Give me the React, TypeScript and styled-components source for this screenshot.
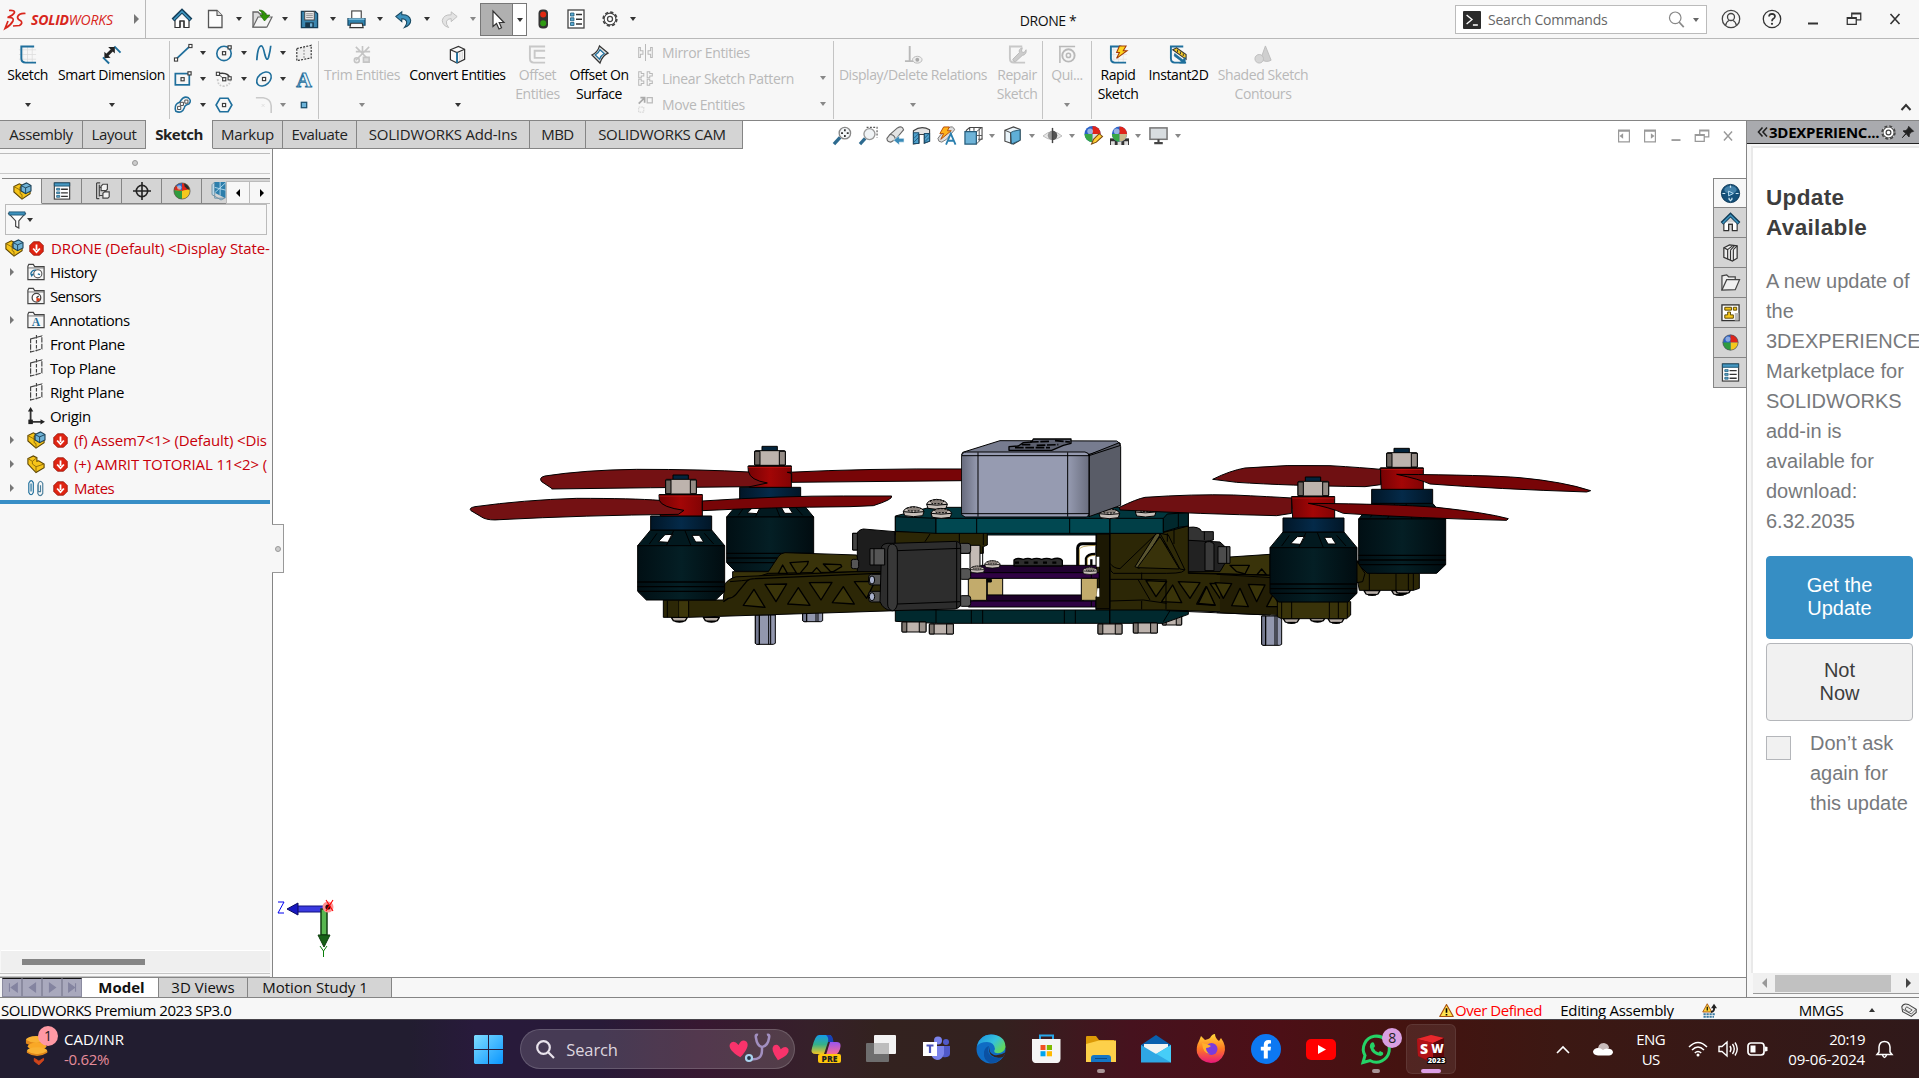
import React from 'react';
import styled, { createGlobalStyle, css } from 'styled-components';

const UI = `"Open Sans", "Noto Sans", sans-serif`;
const BLUE = '#1f6f9c';
const DARK = '#3c3c3c';
const DIM = '#b9b9b9';

const Global = createGlobalStyle`
  * { box-sizing: border-box; }
  html, body { margin: 0; height: 100%; overflow: hidden; }
  body { font-family: ${UI}; font-size: 15px; color: #000; background: #f7f7f7; }
  svg { display: block; flex: none; overflow: visible; }
`;

const Shell = styled.div`
  width: 1919px; height: 1078px; display: flex; flex-direction: column; overflow: hidden;
`;
const Label = styled.span<{ $ls?: number; $size?: number; $color?: string; $bold?: boolean; $lh?: number }>`
  white-space: pre;
  line-height: ${p => p.$lh ?? 19}px;
  letter-spacing: ${p => p.$ls ?? -0.5}px;
  font-size: ${p => p.$size ?? 15}px;
  font-weight: ${p => (p.$bold ? 700 : 400)};
  color: ${p => p.$color ?? 'inherit'};
`;
const Slot = styled.div<{ $w: number; $pad?: number }>`
  width: ${p => p.$w}px; flex: none; display: flex; align-items: center; justify-content: center;
  padding-top: ${p => p.$pad ?? 0}px;
`;
const Space = styled.div<{ $w?: number }>`
  ${p => (p.$w ? css`width: ${p.$w}px; flex: none;` : css`flex: 1;`)}
`;
const Caret = styled.i<{ $c?: string }>`
  width: 0; height: 0; border: 3px solid transparent; border-bottom: 0;
  border-top: 4px solid ${p => p.$c ?? '#333'};
`;

/* ---------- icons ---------- */
type IconBody = React.ReactNode;
const hatch = (c: string) => <path d="M5 1V19M10 1V19M15 1V19M1 5H19M1 10H19M1 15H19" stroke={c} strokeWidth=".8" />;
const icons: Record<string, IconBody> = {
  home: <><path d="M3 10V18.500H8V12H12V18.500H17V10" fill="#fff" stroke="#333" strokeWidth="1.200" /><path d="M8 18.500V12H12V18.500" fill="none" stroke="#333" strokeWidth="1.200" /><path d="M1 11L10 2L19 11" fill="none" stroke="#123c57" strokeWidth="4" /><path d="M1.800 10.600L10 2.400L18.200 10.600" fill="none" stroke="#3d93bd" strokeWidth="1.700" /></>,
  file: <><path d="M3.500 1.500H12L17 6.500V18.500H3.500Z" fill="#fdfdfd" stroke="#555" strokeWidth="1.300" /><path d="M12 1.500V6.500H17" fill="#ddd" stroke="#555" strokeWidth="1.100" /></>,
  open: <><path d="M1 18V3H6L8 5H14V18Z" fill="#ddd" stroke="#666" strokeWidth="1.300" /><path d="M1 18L6 8H20L15 18Z" fill="#f4f4f4" stroke="#666" strokeWidth="1.200" /><path d="M7 1Q13 1 14 6H18L12.500 12L8 6H11Q10 3 7 1Z" fill="#2f9406" stroke="#1d6304" strokeWidth=".6" /></>,
  save: <><path d="M1.500 1.500H16L18.500 4V18.500H1.500Z" fill="#3a86af" stroke="#143f5a" strokeWidth="1.400" /><rect x="5" y="1.500" width="10" height="9" fill="#f2f2f2" stroke="#444" /><path d="M6.500 4H13.500M6.500 6H13.500M6.500 8H13.500" stroke="#777" strokeWidth=".9" /><rect x="5.500" y="13" width="9" height="5.500" fill="#16364a" /><rect x="10.500" y="14" width="2.500" height="3.600" fill="#6fb1d6" /></>,
  print: <><rect x="5" y="1" width="10" height="8" fill="#fff" stroke="#444" strokeWidth="1.200" /><path d="M1 9H19V16H1Z" fill="#2f83ae" stroke="#14425e" strokeWidth="1.200" /><path d="M1.500 9.500H18.500" stroke="#8cc6e2" strokeWidth="1.500" /><path d="M4 14H16L17 18.500H3Z" fill="#f7f7f7" stroke="#333" strokeWidth="1.200" /></>,
  undo: <path d="M1 6.500L8 1V4.500Q17 4 18.500 11Q18.500 17 11 19.500Q14.500 15.500 13.500 12Q12 8.800 8 9V12.500Z" fill="#3d92bd" stroke="#16465f" strokeWidth="1.200" />,
  redo: <path d="M19 6.500L12 1V4.500Q3 4 1.500 11Q1.500 17 9 19.500Q5.500 15.500 6.500 12Q8 8.800 12 9V12.500Z" fill="#e3e3e3" stroke="#bdbdbd" strokeWidth="1.100" />,
  cursor: <path d="M6 1V16.500L9.500 13.500L12 19L14.500 17.800L12.200 12.500H17Z" fill="#fff" stroke="#333" strokeWidth="1.200" />,
  traffic: <><rect x="5.500" y=".5" width="9.500" height="19" rx="4" fill="#333" /><circle cx="10.200" cy="5.500" r="3" fill="#e12a12" /><circle cx="10.200" cy="14.200" r="3" fill="#2f9a13" /></>,
  list: <><rect x="2" y="1" width="16" height="18" fill="#fff" stroke="#444" strokeWidth="1.300" /><path d="M4.500 4H8V7H4.500ZM4.500 8.800H8V11.800H4.500ZM4.500 13.500H8V16.500H4.500Z" fill="#59a8d0" stroke="#205a79" strokeWidth=".8" /><path d="M10 5.500H16M10 10.300H16M10 15H16" stroke="#333" strokeWidth="1.500" /></>,
  gear: <><circle cx="10" cy="10" r="7.600" fill="#fff" stroke="#444" strokeWidth="1.800" strokeDasharray="3.600 2.370" /><circle cx="10" cy="10" r="6.500" fill="#fff" stroke="#444" strokeWidth="1.200" /><circle cx="10" cy="10" r="2.800" fill="#fff" stroke="#444" strokeWidth="1.400" /></>,
  sketch: <>{hatch('#ddd')}<path d="M17 1.500H3.500V14Q3.500 18.500 8 18.500H19" fill="none" stroke={BLUE} strokeWidth="2" /></>,
  dim: <><path d="M1 13L7.500 19.500M13 1.500L19.500 8" stroke={BLUE} strokeWidth="2" /><path d="M4.500 11.500L10.500 5.500" stroke="#222" strokeWidth="3.200" /><path d="M6.500 2H13.500V9ZM2.500 7V14L9 13.500Z" fill="#222" /></>,
  line: <><path d="M2 17L18 2" stroke={BLUE} strokeWidth="2" /><rect x="0.500" y="15.500" width="3.500" height="3.500" fill="#fff" stroke={DARK} strokeWidth="1.200" /><rect x="16.500" y=".5" width="3.500" height="3.500" fill="#fff" stroke={DARK} strokeWidth="1.200" /></>,
  circle: <><circle cx="10" cy="10.500" r="8" fill="none" stroke={BLUE} strokeWidth="1.800" /><rect x="8.300" y="8.500" width="3.500" height="3.500" fill="#fff" stroke={DARK} strokeWidth="1.300" /><rect x="14.500" y="2" width="3.500" height="3.500" fill="#fff" stroke={DARK} strokeWidth="1.300" /></>,
  spline: <path d="M2 18Q3 2 7 2Q9 2 11 12Q13 20 15 15Q17 8 17.500 2" fill="none" stroke={BLUE} strokeWidth="1.900" />,
  plane3: <><path d="M2 5L18 1.500V15.500L2 18.500Z" fill="#eee" stroke="#333" strokeWidth="1.300" strokeDasharray="2.200 1.400" /><path d="M10 3V17" stroke="#777" strokeDasharray="2 1.500" /></>,
  rect: <><rect x="1.500" y="4" width="15.500" height="12.500" fill="none" stroke={BLUE} strokeWidth="1.900" /><rect x="7.800" y="8.500" width="3.500" height="3.500" fill="#fff" stroke={DARK} strokeWidth="1.300" /><rect x="15.500" y="2" width="3.500" height="3.500" fill="#fff" stroke={DARK} strokeWidth="1.300" /></>,
  arc: <><path d="M4 4Q15 2 17 10" fill="none" stroke={DARK} strokeWidth="1.700" /><path d="M3 10Q3 18 10 18Q17 17 17 11" fill="none" stroke="#ccc" strokeWidth="2" strokeDasharray="2 1.500" /><path d="M3 4L10 10" stroke={DARK} /><rect x="1.500" y="2.500" width="3.500" height="3.500" fill="#fff" stroke={DARK} strokeWidth="1.200" /><rect x="8.500" y="8.500" width="3.500" height="3.500" fill="#fff" stroke={DARK} strokeWidth="1.300" /><rect x="14.500" y="7.500" width="3.500" height="3.500" fill="#fff" stroke={DARK} strokeWidth="1.200" /></>,
  ellipse: <><ellipse cx="10" cy="10" rx="9.200" ry="6.500" transform="rotate(-42 10 10)" fill="none" stroke={BLUE} strokeWidth="1.800" /><rect x="8.300" y="8.300" width="3.500" height="3.500" fill="#fff" stroke={DARK} strokeWidth="1.300" /></>,
  slot: <><path d="M2 17Q0 11 4 8Q7 7 7.500 5Q11 -.5 16 2Q20 5 16.500 9Q12 10 11.500 13Q9 20 2 17Z" fill="none" stroke={BLUE} strokeWidth="1.700" /><path d="M4 11.500H7.500V15H4ZM7 7H10.500V10.500H7ZM12 4.500H15.500V8H12Z" fill="#fff" stroke={DARK} /></>,
  hex: <><path d="M5.500 2.500H14.500L18.800 10L14.500 17.500H5.500L1.200 10Z" fill="none" stroke={BLUE} strokeWidth="1.800" /><rect x="8.300" y="8.300" width="3.500" height="3.500" fill="#fff" stroke={DARK} strokeWidth="1.300" /></>,
  fillet: <><path d="M1 2H9Q17.500 3 18 11V19" fill="none" stroke="#cacaca" strokeWidth="1.800" /><path d="M7.500 9L10.500 12M10.500 9L7.500 12" stroke="#ddd" /></>,
  point: <rect x="7" y="7" width="6" height="6" fill="#6db4da" stroke="#1b506e" strokeWidth="1.400" />,
  trim: <g stroke="#c4c4c4" fill="none" strokeWidth="1.700"><path d="M3 2L17 16M17 2L3 16M10 1V6M3 7H18" /><circle cx="4" cy="16" r="2.600" /><path d="M11 13H17V18H11Z" fill="#ddd" /></g>,
  convert: <><path d="M2.500 5L11 1.500L17.500 4.500V15L9.500 19L2.500 15.500Z" fill="#fafafa" stroke="#333" strokeWidth="1.300" /><path d="M2.500 5L9.500 8L17.500 4.500" fill="none" stroke="#333" strokeWidth="1.200" /><path d="M9.500 8V19" stroke={BLUE} strokeWidth="2" /><path d="M12.500 8V17M15 7V15.500" stroke="#ccc" /></>,
  offset: <path d="M18 1.500H2V14Q2 18.500 6 18.500H18M18 6H7V13.500H18" fill="none" stroke="#c8c8c8" strokeWidth="2" />,
  surface: <><path d="M10 1L19 8.500Q13 11 10.500 19L2 10.500Q8 8 10 1Z" fill="#ddd" stroke="#333" strokeWidth="1.300" /><path d="M10.500 5L15 9Q11.500 11 10 15L5.500 10.500Q9 8.500 10.500 5Z" fill="#f4f9fc" stroke={BLUE} strokeWidth="1.300" /></>,
  mirror: <g stroke={DIM} fill="none" strokeWidth="1.200"><path d="M10 0V20" /><path d="M2 4H4V8H7V12H4V16H2ZM18 4H16V8H13V12H16V16H18Z" /></g>,
  pattern: <g stroke={DIM} fill="none" strokeWidth="1.200"><path d="M2 2H5V4H8V7H5V9H2ZM12 2H15V4H18V7H15V9H12ZM2 11H5V13H8V16H5V18H2ZM12 11H15V13H18V16H15V18H12Z" /></g>,
  move: <><path d="M2 9L8 3M4 2H9V8" stroke="#aaa" fill="none" strokeWidth="2" /><path d="M12 2H18V8H12Z" fill="none" stroke="#bbb" strokeWidth="1.500" /><path d="M2 13H8V19H2Z" fill="none" stroke="#ccc" strokeDasharray="2 1" /></>,
  relations: <><path d="M6 1V17M1 17H10" stroke={DIM} strokeWidth="2" /><ellipse cx="14" cy="15.500" rx="5" ry="3.600" fill="#eee" stroke={DIM} /><circle cx="14" cy="15.500" r="2" fill="#aaa" /></>,
  repair: <><path d="M15 1.500H2V14Q2 18.500 6 18.500H18" fill="none" stroke="#c8c8c8" strokeWidth="2" /><path d="M5 15L12 8Q11 4 15 3L14 7L17 8L19 5Q20 10 15 11L8 17.500Q5 18 5 15Z" fill="#ccc" stroke="#bbb" /></>,
  quick: <><path d="M1 1.500H18M2 1V19" stroke={DIM} strokeWidth="1.600" /><circle cx="11" cy="11" r="6.500" fill="none" stroke={DIM} strokeWidth="2" /><circle cx="11" cy="11" r="2.200" fill="none" stroke={DIM} strokeWidth="1.600" /></>,
  rapid: <>{hatch('#e2e2e2')}<path d="M13 1.500H2V14Q2 18.500 6 18.500H18" fill="none" stroke={BLUE} strokeWidth="2" /><path d="M11 1H18L15 6H19L8 14L11 8H8Z" fill="#ffd51f" stroke="#a33a08" strokeWidth="1.100" /></>,
  instant: <><path d="M15 1.500H2V14Q2 18.500 6 18.500H18" fill="none" stroke={BLUE} strokeWidth="2" /><path d="M4 5L8 3L18 10V15L15 13Z" fill="#f4cb2a" stroke="#333" strokeWidth="1.100" /><path d="M9 5V7.500M12 7V9.500M15 9V11.500" stroke="#333" /><path d="M6 9L14.500 15.500L17 13V19H11L13 17L5.500 11.500Z" fill={BLUE} stroke={BLUE} strokeWidth=".8" /></>,
  shaded: <><path d="M12 1L18 16Q13 19 7 15Z" fill="#cfcfcf" stroke="#bdbdbd" /><circle cx="5.500" cy="14.500" r="4.500" fill="#d6d6d6" stroke="#bdbdbd" /></>,
  zoomfit: <><path d="M1 19L7.500 12" stroke="#2d6a8f" strokeWidth="3.600" /><circle cx="12.500" cy="7.500" r="6" fill="#f3f6f8" stroke="#888" strokeWidth="1.400" /><path d="M12.500 3.500V5.500M12.500 9.500V11.500M8.500 7.500H10.500M14.500 7.500H16.500" stroke="#333" strokeWidth="1.800" /></>,
  zoomarea: <><path d="M8 1.500H19V12" fill="none" stroke="#555" strokeDasharray="2 1.500" strokeWidth="1.200" /><path d="M1 19L6.500 13" stroke="#2d6a8f" strokeWidth="3.400" /><circle cx="11" cy="8.500" r="5.800" fill="#f0f3f5" stroke="#999" strokeWidth="1.400" /></>,
  prev: <><path d="M1 13L4 9L12 2Q17 -1 18.500 4L10 14L5 17Q1 17 1 13Z" fill="#e4e4e4" stroke="#666" strokeWidth="1.200" /><path d="M4 9Q9 9 10 14" fill="none" stroke="#666" strokeWidth="1.200" /><path d="M8 15L14 10V13H19V17H14V20Z" fill="#3a8bb8" stroke="#fff" strokeWidth=".6" /></>,
  section: <><path d="M1.500 5Q10 -1 18.500 4V16L13 18V9L7.500 9V18L1.500 19Z" fill="#e4e4e4" stroke="#444" strokeWidth="1.200" /><path d="M1.500 7H7V18.500H1.500ZM13 8H18.500V16L13 18Z" fill="#4d9fca" stroke="#1d4e6d" strokeWidth="1.100" /><path d="M2 13L7 8M2 17L7 12M13 13L18 8M13 17L18 12" stroke="#1d4e6d" strokeWidth=".8" /></>,
  annot: <><path d="M1 13L4 9L12 2Q17 -1 18.500 4L10 14L5 17Q1 17 1 13Z" fill="#ddd" stroke="#777" /><path d="M7 1H13L11 5H15L4 14L7 8H3Z" fill="#ffb21a" stroke="#b34a08" /><path d="M9.500 19.500L14.500 8L19.500 19.500M12 15.500H17.500" fill="none" stroke="#2a7fae" strokeWidth="1.900" /></>,
  orient: <><path d="M6 5V1.500H19V14H15M10.500 1.500V5M6 1.500L2 5" fill="none" stroke="#444" strokeWidth="1.100" /><path d="M1 19V6H13V19Z" fill="#6fb4d8" stroke="#255b7a" strokeWidth="1.300" /><path d="M13 6L19 1.500M13 19L19 13M16 1V16M13 10H19" stroke="#555" /></>,
  display: <><path d="M2 4.500L11 1L18 3.500V15L11 19L2 16Z" fill="#e9f4fa" stroke="#444" strokeWidth="1.200" /><path d="M8 7L11 5.500L18 4V15L9 19Z" fill="#5fafd7" stroke="#24556f" /><path d="M2 4.500L8 7V18.500" fill="none" stroke="#444" /></>,
  eye: <><path d="M0 10.500Q10 1.500 20 10.500Q10 18 0 10.500Z" fill="#e8e8e8" stroke="#bbb" /><circle cx="10" cy="10" r="5" fill="#999" /><path d="M10 5A5 5 0 0 1 10 15Z" fill="#555" /><path d="M10 2V18" stroke="#444" strokeWidth="1.500" /></>,
  sphere: <><circle cx="10" cy="10" r="9" fill="#2a62c8" /><path d="M10 10V1A9 9 0 0 1 19 10Z" fill="#e02419" /><path d="M10 10H19A9 9 0 0 1 10 19Z" fill="#f4c81e" /><path d="M10 10V19A9 9 0 0 1 1 10Z" fill="#2f9b3e" /><circle cx="7" cy="6" r="3" fill="#fff" opacity=".45" /><circle cx="10" cy="10" r="9" fill="none" stroke="#555" strokeWidth=".8" /></>,
  ball: <><circle cx="10" cy="10" r="9" fill="#e6c31a" /><path d="M10 10L3 4A9 9 0 0 1 10 1Z" fill="#2a62c8" /><path d="M10 10V1A9 9 0 0 1 18.500 8Z" fill="#e02419" /><path d="M10 10L18.500 8A9 9 0 0 1 10 19Z" fill="#f4c81e" /><path d="M10 10V19A9 9 0 0 1 1 9Z" fill="#2f9b3e" /><path d="M10 10L1 9Q1 6 3 4Z" fill="#d62b1c" /><path d="M12 1Q18 3 18.500 9Q15 8 13 5Z" fill="#2b2b2b" /><circle cx="7" cy="6" r="2.500" fill="#fff" opacity=".5" /><circle cx="10" cy="10" r="9" fill="none" stroke="#555" strokeWidth=".8" /></>,
  appearance: <><circle cx="9" cy="8.500" r="8.500" fill="#2a62c8" /><path d="M9 8.500V0A8.500 8.500 0 0 1 17.500 8.500Z" fill="#e02419" /><path d="M9 8.500H.5A8.500 8.500 0 0 0 9 17Z" fill="#37a746" /><path d="M9 8.500H17.500A8.500 8.500 0 0 1 9 17Z" fill="#ddd" /><circle cx="6.500" cy="5.500" r="3" fill="#fff" opacity=".5" /><path d="M8 19L10 14L16 8L19.500 11L13 17Z" fill="#ffcf33" stroke="#7c4a11" strokeWidth="1.100" /></>,
  scene: <><path d="M0 13H20V20H0Z" fill="#333" /><path d="M1 16H5V20H1ZM8 16H12V20H8ZM15 16H19V20H15Z" fill="#ddd" /><circle cx="10" cy="8.500" r="8" fill="#2a62c8" /><path d="M10 8.500V.5A8 8 0 0 1 18 8.500Z" fill="#e02419" /><path d="M10 8.500H2A8 8 0 0 0 10 16.500Z" fill="#37a746" /><path d="M10 8.500H18A8 8 0 0 1 10 16.500Z" fill="#c9b98a" /><circle cx="7" cy="5.500" r="3" fill="#fff" opacity=".5" /></>,
  monitor: <><rect x="1" y="2" width="18" height="12" fill="#d8dde0" stroke="#777" strokeWidth="1.600" /><path d="M10 14V17.500M5.500 18H14.500" stroke="#444" strokeWidth="2.200" /></>,
  assembly: <><path d="M1 11V5L7 2L11 4L8 6V9L12 11L19 8V13L10 19Z" fill="#f6c419" stroke="#5d4503" strokeWidth="1.200" /><path d="M1 5L8 9V13L10 14V19" fill="none" stroke="#8a6a09" /><path d="M9 4L15 1L20 4V10L14 13L9 10Z" fill="#6fb2d6" stroke="#1a3f55" strokeWidth="1.200" /><path d="M9 4L14 6.500L20 4M14 6.500V13" stroke="#1a3f55" fill="none" /></>,
  part: <><path d="M1 10V4L7 1L11 3V7L13 6.500L19 10V14L10 19.500Z" fill="#f6c419" stroke="#5d4503" strokeWidth="1.200" /><path d="M1 4L6 7V10L10 13V19M6 7L11 3M10 13L19 10" fill="none" stroke="#8a6a09" /></>,
  props: <><rect x="1.500" y="1" width="17" height="18" fill="#fff" stroke="#444" strokeWidth="1.300" /><path d="M1.500 1H18.500V4.500H1.500Z" fill="#4698c2" stroke="#1c516e" /><path d="M4 7H7.500V9H4ZM4 11H7.500V13H4ZM4 15H7.500V17H4Z" fill="#5aa9d1" stroke="#1e5877" strokeWidth=".8" /><path d="M9 8H16.500M9 12H16.500M9 16H16.500" stroke="#333" strokeWidth="1.500" /></>,
  config: <g fill="#f2f2f2" stroke="#444" strokeWidth="1.300"><path d="M4 1V18.500M7 3V16M4 1H8M7 6H11M7 15H11M4 18.500H7" fill="none" /><path d="M9 4.500L11 2.500H16V8L14.500 9.500H9ZM11 12.500L13 11H18V16.500L16.500 18H11Z" /></g>,
  target: <><circle cx="10" cy="10" r="6.300" fill="none" stroke="#222" strokeWidth="1.800" /><path d="M10 0V20M0 10H20" stroke="#222" strokeWidth="1.800" /></>,
  cam: <><path d="M0 3L3 0V18H14L10 20L0 14Z" fill="#bcd9ea" stroke="#6c8ea2" /><path d="M3 0H15V18L3 12Z" fill="#2d7fac" /><path d="M3 6L15 9M9 0V15M3 12L15 1" stroke="#b9ddef" /></>,
  filter: <><path d="M1 3H19L12 11V19L8.500 17V11Z" fill="#fff" stroke="#444" strokeWidth="1.300" /><path d="M1 1H19V4.500H1Z" fill="#3d91bc" stroke="#1a5170" strokeWidth=".9" /></>,
  history: <><path d="M1 3.500L2 1.500H7L8.500 4H19V18.500H1Z" fill="#f6f6f6" stroke="#444" strokeWidth="1.300" /><path d="M1 5.500H19" stroke="#666" /><circle cx="12" cy="12" r="4.500" fill="#fff" stroke="#555" strokeWidth="1.200" /><path d="M12 12L14.500 13M4 12Q6 7 10 8" fill="none" stroke={BLUE} strokeWidth="1.400" /><path d="M3.500 12H8L5 15.500Z" fill={BLUE} /></>,
  sensors: <><path d="M1 3.500L2 1.500H7L8.500 4H19V18.500H1Z" fill="#f6f6f6" stroke="#444" strokeWidth="1.300" /><path d="M1 5.500H19" stroke="#666" /><circle cx="10.500" cy="12" r="4.800" fill="#fff" stroke="#444" strokeWidth="1.400" /><path d="M10.500 12L13 10" stroke="#333" strokeWidth="1.400" /><path d="M10.500 12L15 13Q14 16 10.500 16.500Z" fill="#dd3a18" /></>,
  annotations: <><path d="M1 3.500L2 1.500H7L8.500 4H19V18.500H1Z" fill="#f6f6f6" stroke="#444" strokeWidth="1.300" /><path d="M1 5.500H19" stroke="#666" /><text x="10" y="17" fontSize="13" fontFamily="Liberation Serif, serif" fontWeight="700" fill={BLUE} textAnchor="middle">A</text></>,
  plane: <><path d="M4 4.500L16.500 1V15.500L4 19Z" fill="none" stroke="#444" strokeWidth="1.300" strokeDasharray="6 1.200" /><path d="M10.500 0V18" stroke="#444" strokeWidth="1.300" strokeDasharray="4 1.500" /></>,
  origin: <><path d="M4 3V16.500H17" fill="none" stroke="#333" strokeWidth="2" /><path d="M4 0L7 5H1ZM20 16.500L15 13.500V19.500Z" fill="#222" /><rect x="1.500" y="14" width="5" height="5" fill="#222" /></>,
  mates: <g fill="none" strokeWidth="1.300"><path d="M2 4V15Q4.500 20 7 15V4Q4.500 -.5 2.500 4M4.500 5V14" stroke={BLUE} /><path d="M12 6V16Q14.500 21 17.500 16V5Q15 0 12.500 5V14H15V7" stroke="#4b7f9c" /></g>,
  down: <><path d="M6 1H14L19 6V14L14 19H6L1 14V6Z" fill="#df2412" stroke="#8c0d03" /><path d="M10 4.500V12M5.500 10L10 15L14.500 10" fill="none" stroke="#fff" strokeWidth="2.400" /></>,
  compass: <><circle cx="10" cy="10" r="9.600" fill="#14507a" stroke="#0d3958" /><ellipse cx="10" cy="6" rx="6.500" ry="4" fill="#5796bd" opacity=".7" /><path d="M8 7.500L13 10L8 12.500Z" fill="#1d6b9c" stroke="#bfe0f3" /><path d="M1.500 10H4.500M15.500 10H18.500M10 1.500V4M8.500 14.500V16L10 17.500L11.500 16V14.500" stroke="#cfe8f5" strokeWidth="1.300" fill="none" /></>,
  books: <><path d="M3 5L9 2L17 3V16L12 19L3 15Z" fill="#eee" stroke="#333" strokeWidth="1.300" /><path d="M3 5L7 7V17M7 7L12 3M10 7.500V18M10 7.500L14 3M13 7V18.500M13 7L17 3" fill="none" stroke="#333" strokeWidth="1.200" /></>,
  folder: <><path d="M1 18V3L6 2L8 4H15V7" fill="#eee" stroke="#444" strokeWidth="1.300" /><path d="M1 18L6 7H19.500L15 17.500Z" fill="#f0f0f0" stroke="#444" strokeWidth="1.300" /></>,
  palette: <><rect x="1" y="2" width="18" height="16.500" fill="#fff" stroke="#333" strokeWidth="1.400" /><path d="M4 4.500H11V7.500H4ZM13 4.500H16.500V7.500H13ZM7 9.500H10V12.500H13V16H4V12.500H7Z" fill="#f5c61b" stroke="#5a4600" /><rect x="14.500" y="10.500" width="4" height="8" fill="#bbb" /></>,
  warn: <><path d="M10 2L19 18H1Z" fill="#ffe14d" stroke="#a84f0c" strokeWidth="1.500" strokeLinejoin="round" /><path d="M10 7V13M10 14.500V16.500" stroke="#000" strokeWidth="2.200" /></>,
  rebuild: <><path d="M7 1L13 12H1Z" fill="#ffd83b" stroke="#a84f0c" strokeWidth="1.200" /><path d="M7 5V10" stroke="#000" strokeWidth="1.600" /><path d="M12 12Q17 11 16 6" fill="none" stroke="#222" strokeWidth="2.600" /><path d="M12 7L16 1L20 7Z" fill="#222" /><path d="M2 15H18M2 18.500H16" stroke="#3b7ba1" strokeWidth="2.500" strokeDasharray="3 1" /></>,
  tag: <><path d="M1 6Q3 1 9 3L19 9V13L13 18L2 12Z" fill="#eee" stroke="#444" strokeWidth="1.300" /><path d="M7 6L14 10L10 13L5 9ZM2 9L13 15L19 9" fill="none" stroke="#444" /></>,
  user: <g fill="none" stroke="#444" strokeWidth="1.300"><circle cx="10" cy="10" r="8.700" /><circle cx="10" cy="8" r="3.500" /><path d="M4.500 16.500Q5.500 12.500 8 11.500M15.500 16.500Q14.500 12.500 12 11.500" /></g>,
  help: <><circle cx="10" cy="10" r="8.700" fill="none" stroke="#333" strokeWidth="1.300" /><path d="M7 7.500Q7.200 4.800 10 4.800Q13 5 13 7.500Q12.800 9 11 10Q10 10.800 10 12.200" fill="none" stroke="#333" strokeWidth="1.700" /><circle cx="10" cy="14.800" r="1.100" fill="#333" /></>,
  min: <path d="M5 14.500H15" stroke="currentColor" strokeWidth="2" />,
  restore: <path d="M7.500 8V3.500H17.500V11H13M2.500 8.500H12.500V16H2.500ZM2.500 9.200H12.500M7.500 4.200H17.500" fill="none" stroke="currentColor" strokeWidth="1.400" />,
  close: <path d="M5.500 5L14.500 15M14.500 5L5.500 15" stroke="currentColor" strokeWidth="1.600" />,
  paneL: <><path d="M4 3.500H16V16.500H4ZM4 4.500H16" fill="none" stroke="#999" strokeWidth="1.300" /><path d="M9 7V13L5 10Z" fill="#999" /></>,
  paneR: <><path d="M4 3.500H16V16.500H4ZM4 4.500H16" fill="none" stroke="#999" strokeWidth="1.300" /><path d="M11 7V13L15 10Z" fill="#999" /></>,
  loupe: <><circle cx="8.500" cy="8" r="6.800" fill="none" stroke="#888" strokeWidth="1.400" /><path d="M13 13L18.500 19" stroke="#888" strokeWidth="2" /></>,
  prompt: <><rect width="20" height="20" rx="1" fill="#2b2b2b" /><path d="M4 4.500L10 9.500L4 14.500M11 15.500H16.500" fill="none" stroke="#fff" strokeWidth="1.500" /></>,
  pin: <path d="M11 2L18 9L15 10L12 13L11.500 17L7.500 12.500L2 18L7 12L3 8.500L7 8L10 5Z" fill="#222" stroke="#222" strokeWidth="1.300" />,
};
const Icon = ({ n, s = 20 }: { n: string; s?: number }) =>
  n === 'A' ? (
    <svg width={s} height={s} viewBox="0 0 20 20"><text x="10" y="18.500" textAnchor="middle" fontFamily="Liberation Serif, serif" fontWeight="700" fontSize="24" fill="#eaf4fa" stroke={BLUE} strokeWidth="1.100">A</text></svg>
  ) : (
    <svg width={s} height={s} viewBox="0 0 20 20">{icons[n]}</svg>
  );

/* ---------- title bar ---------- */
const TitleBar = styled.header`
  height: 39px; flex: none; display: flex; border-bottom: 1px solid #b9b9b9; background: #f7f7f7; color: #333;
`;
const Brand = styled.div`
  width: 146px; border-right: 1px solid #b9b9b9; display: flex; align-items: center; padding-left: 5px; flex: none;
`;
const BrandText = styled.div`
  font: italic 700 14px "Open Sans", sans-serif; color: #d8261c; letter-spacing: -0.2px; margin-left: 5px; width: 84px; padding-top: 1px;
  span { font-weight: 400; }
`;
const Play = styled.i<{ $c?: string; $dir?: 'l' | 'r'; $s?: number }>`
  width: 0; height: 0; border: ${p => p.$s ?? 4}px solid transparent;
  ${p => p.$dir === 'l' ? css`border-left: 0; border-right-color: ${p.$c ?? '#777'};` : css`border-right: 0; border-left-color: ${p.$c ?? '#777'};`}
`;
const SelectTool = styled.div`
  width: 47px; height: 33px; margin: 3px 0 0; display: flex; border: 1px solid #777; background: #fff; flex: none;
`;
const SelectFace = styled.div`
  width: 32px; background: #b0b0b0; border-right: 1px solid #777; display: flex; align-items: center; justify-content: center;
`;
const SelectDrop = styled.div`flex: 1; display: flex; align-items: center; justify-content: center;`;
const SearchBox = styled.div`
  width: 252px; height: 29px; margin-top: 5px; background: #fff; border: 1px solid #bbb; display: flex; align-items: center; padding-left: 7px; flex: none;
`;

const TitleBarView = () => (
  <TitleBar>
    <Brand>
      <svg width="21" height="22" viewBox="0 0 21 22" fill="none" stroke="#d8261c" strokeWidth="1.700">
        <path d="M4 2.500Q10 2 9.500 4.500Q8 7.500 2.500 9.500Q9.500 9 8 13Q5.500 17.500 0 20.500L3 13M20.500 5.500Q14 5 12.500 9Q12.500 11.500 16 13Q18 15.500 14.500 17.500L8 18" />
      </svg>
      <BrandText>SOLID<span>WORKS</span></BrandText>
      <Slot $w={48}><Play $s={5} /></Slot>
    </Brand>
    <Space $w={20} />
    <Slot $w={32}><Icon n="home" /></Slot>
    <Slot $w={34}><Icon n="file" /></Slot><Slot $w={13}><Caret /></Slot>
    <Slot $w={33}><Icon n="open" /></Slot><Slot $w={14}><Caret /></Slot>
    <Slot $w={34}><Icon n="save" s={19} /></Slot><Slot $w={13}><Caret /></Slot>
    <Slot $w={34}><Icon n="print" s={19} /></Slot><Slot $w={13}><Caret /></Slot>
    <Slot $w={34}><Icon n="undo" s={17} /></Slot><Slot $w={13}><Caret /></Slot>
    <Slot $w={33}><Icon n="redo" s={17} /></Slot><Slot $w={14}><Caret $c="#888" /></Slot>
    <SelectTool><SelectFace><Icon n="cursor" /></SelectFace><SelectDrop><Caret /></SelectDrop></SelectTool>
    <Slot $w={31}><Icon n="traffic" /></Slot>
    <Slot $w={36}><Icon n="list" /></Slot>
    <Slot $w={32}><Icon n="gear" s={18} /></Slot><Slot $w={14}><Caret /></Slot>
    <Space $w={380} />
    <Slot $w={56} $pad={2}><Label $size={14} $ls={-0.4} $color="#111">DRONE *</Label></Slot>
    <Space $w={379} />
    <SearchBox>
      <Icon n="prompt" s={18} />
      <Space $w={7} />
      <Label $color="#666" $size={14} $ls={-0.22}>Search Commands</Label>
      <Space />
      <Icon n="loupe" s={17} />
      <Slot $w={21}><Caret $c="#666" /></Slot>
    </SearchBox>
    <Space $w={3} />
    <Slot $w={41}><Icon n="user" /></Slot>
    <Slot $w={41}><Icon n="help" /></Slot>
    <Slot $w={41}><Icon n="min" /></Slot>
    <Slot $w={41}><Icon n="restore" s={18} /></Slot>
    <Slot $w={41}><Icon n="close" /></Slot>
  </TitleBar>
);

/* ---------- ribbon ---------- */
const Ribbon = styled.div`
  height: 82px; flex: none; display: flex; border-bottom: 1px solid #858585; background: #f7f7f7; padding-top: 2px;
`;
const Tool = styled.div<{ $w: number; $dim?: boolean }>`
  width: ${p => p.$w}px; flex: none; display: flex; flex-direction: column; align-items: center; padding-top: 4px;
  color: ${p => (p.$dim ? DIM : '#000')};
`;
const ToolText = styled.div`
  height: 38px; margin-top: 1px; text-align: center; white-space: pre; font-size: 14px; line-height: 19px; letter-spacing: -0.42px;
`;
const Divider = styled.div`width: 1px; height: 78px; background: #c4c4c4; flex: none;`;
const SketchGrid = styled.div`
  width: 148px; display: grid; grid-template-columns: 25px 15px 27px 13px 27px 12px 29px; grid-auto-rows: 26px;
  align-items: center; justify-items: center; margin-top: -1px; flex: none;
`;
const SmallTools = styled.div`width: 199px; display: flex; flex-direction: column; color: ${DIM}; margin-top: -2px; flex: none;`;
const SmallRow = styled.div`height: 26px; display: flex; align-items: center; padding-left: 4px;`;
const CollapseCorner = styled.div`flex: 1; display: flex; justify-content: flex-end; align-items: flex-end; padding: 0 7px 9px 0;`;

const ToolView = ({ w, icon, text, dim, drop }: { w: number; icon: string; text: string; dim?: boolean; drop?: boolean }) => (
  <Tool $w={w} $dim={dim}>
    <Icon n={icon} s={19} />
    <ToolText>{text}</ToolText>
    {drop && <Caret $c={dim ? '#888' : '#333'} />}
  </Tool>
);
const grid: (string | 1 | 0)[] = ['line', 1, 'circle', 1, 'spline', 1, 'plane3', 'rect', 1, 'arc', 1, 'ellipse', 1, 'A', 'slot', 1, 'hex', 0, 'fillet', 1, 'point'];

const RibbonView = () => (
  <Ribbon>
    <ToolView w={55} icon="sketch" text="Sketch" drop />
    <ToolView w={113} icon="dim" text="Smart Dimension" drop />
    <Space $w={1} />
    <Divider />
    <SketchGrid>
      {grid.map((g, i) => typeof g === 'string' ? <Icon key={i} n={g} s={18} /> : g ? <Caret key={i} $c={i === 19 ? '#888' : '#333'} /> : <span key={i} />)}
    </SketchGrid>
    <Divider />
    <ToolView w={86} icon="trim" text="Trim Entities" dim drop />
    <ToolView w={105} icon="convert" text="Convert Entities" drop />
    <ToolView w={55} icon="offset" text={'Offset\nEntities'} dim />
    <ToolView w={68} icon="surface" text={'Offset On\nSurface'} />
    <SmallTools>
      {([['mirror', 'Mirror Entities', 0], ['pattern', 'Linear Sketch Pattern', 1], ['move', 'Move Entities', 1]] as const).map(([ic, t, d]) => (
        <SmallRow key={t}><Icon n={ic} s={17} /><Space $w={8} /><Label $size={14} $ls={-0.36}>{t}</Label><Space />{d ? <Slot $w={18}><Caret $c="#888" /></Slot> : null}</SmallRow>
      ))}
    </SmallTools>
    <Space $w={1} />
    <Divider />
    <ToolView w={158} icon="relations" text="Display/Delete Relations" dim drop />
    <ToolView w={50} icon="repair" text={'Repair\nSketch'} dim />
    <Divider />
    <ToolView w={48} icon="quick" text="Qui..." dim drop />
    <Divider />
    <ToolView w={52} icon="rapid" text={'Rapid\nSketch'} />
    <ToolView w={69} icon="instant" text="Instant2D" />
    <ToolView w={100} icon="shaded" text={'Shaded Sketch\nContours'} dim />
    <CollapseCorner><svg width="12" height="8" viewBox="0 0 12 8"><path d="M1.500 7L6 2L10.500 7" fill="none" stroke="#333" strokeWidth="2" /></svg></CollapseCorner>
  </Ribbon>
);

/* ---------- middle area ---------- */
const Middle = styled.div`height: 877px; flex: none; display: flex;`;
const WorkArea = styled.div`width: 1746px; height: 877px; display: flex; flex-direction: column; background: #fff; flex: none;`;
const TabsAndHud = styled.div`height: 28px; display: flex; flex: none;`;
const CommandTab = styled.div<{ $w: number; $on?: boolean; $shift?: number }>`
  width: ${p => p.$w}px; height: 28px; flex: none; display: flex; align-items: center; justify-content: center;
  padding-right: ${p => p.$shift ?? 0}px;
  background: ${p => (p.$on ? '#f7f7f7' : '#d4d4d4')}; color: #222;
  border-right: 1px solid #858585; border-bottom: 1px solid ${p => (p.$on ? '#f7f7f7' : '#858585')};
  ${p => p.$on && css`margin-top: -1px; height: 29px;`}
`;
const commandTabs: [string, number, number, number][] = [['Assembly', 83, -0.4, 0], ['Layout', 63, -0.4, 0], ['Sketch', 67, -0.5, 0], ['Markup', 70, -0.2, 0], ['Evaluate', 74, -0.4, 0], ['SOLIDWORKS Add-Ins', 173, -0.2, 0], ['MBD', 56, -0.6, 0], ['SOLIDWORKS CAM', 157, -0.26, 4]];
const hud: [string, number][] = [['zoomfit', 26], ['zoomarea', 27], ['prev', 26], ['section', 26], ['annot', 25], ['orient', 28], ['', 10], ['display', 31], ['', 8], ['eye', 32], ['', 7], ['appearance', 36], ['scene', 16], ['', 22], ['monitor', 19], ['', 20]];
const DocButton = styled.div`width: 26px; flex: none; display: flex; align-items: center; justify-content: center; padding-top: 2px; color: #999;`;

const Body = styled.div`flex: 1; display: flex; min-height: 0;`;
const Side = styled.aside`
  width: 273px; height: 828px; flex: none; display: flex; flex-direction: column; background: #f7f7f7; border-right: 1px solid #858585; position: relative;
`;
const Grip = styled.div`
  margin: 4px 2px 0 0; border-top: 1px solid #bbb; border-bottom: 1px solid #c9c9c9;
  display: flex; justify-content: center; padding-top: 6px; height: 21px; flex: none;
`;
const Dot = styled.i`width: 6px; height: 6px; border-radius: 50%; border: 1px solid #999; background: #ccc;`;
const ManagerTabs = styled.div`
  height: 26px; margin: 4px 2px 0 2px; display: flex; border-top: 1px solid #858585; flex: none; background: #d4d4d4;
`;
const ManagerTab = styled.div<{ $w?: number; $on?: boolean }>`
  width: ${p => p.$w ?? 40}px; flex: none; display: flex; align-items: center; justify-content: center; overflow: hidden;
  background: ${p => (p.$on ? '#f7f7f7' : '#d4d4d4')}; border-right: 1px solid #858585;
  border-bottom: 1px solid ${p => (p.$on ? '#f7f7f7' : '#858585')};
`;
const ClippedTab = styled(ManagerTab)`justify-content: flex-start; padding-left: 10px; border-right: 0;`;
const ScrollBtn = styled.div<{ $w: number }>`
  width: ${p => p.$w}px; flex: none; margin-top: 2px; background: #f7f7f7; border: 1px solid #bbb; border-right-width: ${p => (p.$w > 22 ? 1 : 0)}px;
  border-left-width: ${p => (p.$w > 22 ? 1 : 0)}px; display: flex; align-items: center; justify-content: center;
  padding-left: ${p => (p.$w > 22 ? 0 : 3)}px;
`;
const FilterBox = styled.div`
  margin: 0 5px 0 5px; height: 31px; border: 1px solid #bbb; flex: none; display: flex; align-items: center; padding-left: 2px; gap: 1px;
`;
const Tree = styled.div`width: 270px; padding-top: 1px; flex: none; overflow: hidden; border-bottom: 4px solid #388ec6; height: 269px;`;
const TreeRow = styled.div<{ $err?: boolean }>`
  height: 24px; display: flex; align-items: center; white-space: pre; color: ${p => (p.$err ? '#c8000a' : '#000')};
`;
const HScroll = styled.div`
  height: 22px; margin: 0 2px 0 1px; background: #efefef; border-top: 1px solid #fff; padding: 8px 0 0 21px; flex: none;
`;
const HThumb = styled.div`width: 123px; height: 6px; background: #858585;`;
const SideFoot = styled.div`margin: 1px 2px 0 0; border-top: 1px solid #c4c4c4; border-bottom: 1px solid #c4c4c4; height: 4px; flex: none;`;
const SplitHandle = styled.div`
  position: absolute; left: 272px; top: 375px; width: 12px; height: 49px; border: 1px solid #999; border-left: 0; background: #f7f7f7;
  display: flex; align-items: center; justify-content: center; z-index: 2;
`;
const rows: { icon: string; text: string; arrow?: boolean; err?: boolean; ls?: number }[] = [
  { icon: 'history', text: 'History', arrow: true }, { icon: 'sensors', text: 'Sensors', ls: -0.65 }, { icon: 'annotations', text: 'Annotations', arrow: true },
  { icon: 'plane', text: 'Front Plane' }, { icon: 'plane', text: 'Top Plane', ls: -0.4 }, { icon: 'plane', text: 'Right Plane', ls: -0.4 }, { icon: 'origin', text: 'Origin', ls: -0.3 },
  { icon: 'assembly', text: '(f) Assem7<1> (Default) <Dis', arrow: true, err: true, ls: -0.12 }, { icon: 'part', text: '(+) AMRIT TOTORIAL 11<2> (', arrow: true, err: true, ls: -0.1 },
  { icon: 'mates', text: 'Mates', arrow: true, err: true },
];

const SideView = () => (
  <Side>
    <Grip><Dot /></Grip>
    <ManagerTabs>
      <ManagerTab $w={40} $on><Icon n="assembly" s={18} /></ManagerTab>
      <ManagerTab><Icon n="props" s={18} /></ManagerTab>
      <ManagerTab><Icon n="config" s={18} /></ManagerTab>
      <ManagerTab><Icon n="target" s={18} /></ManagerTab>
      <ManagerTab><Icon n="ball" s={18} /></ManagerTab>
      <ClippedTab $w={24}><Icon n="cam" s={18} /></ClippedTab>
      <ScrollBtn $w={24}><Play $c="#000" $dir="l" /></ScrollBtn>
      <ScrollBtn $w={20}><Play $c="#000" /></ScrollBtn>
    </ManagerTabs>
    <FilterBox><Icon n="filter" s={18} /><Caret $c="#333" /></FilterBox>
    <Tree>
      <TreeRow $err><Space $w={5} /><Icon n="assembly" s={18} /><Space $w={6} /><Icon n="down" s={15} /><Space $w={7} /><Label $ls={-0.13}>DRONE (Default) &lt;Display State-</Label></TreeRow>
      {rows.map(r => (
        <TreeRow key={r.text} $err={r.err}>
          <Space $w={9} /><Slot $w={6}>{r.arrow && <Play />}</Slot><Space $w={12} />
          <Icon n={r.icon} s={18} /><Space $w={r.err ? 8 : 5} />
          {r.err && <><Icon n="down" s={15} /><Space $w={6} /></>}
          <Label $ls={r.ls ?? -0.5}>{r.text}</Label>
        </TreeRow>
      ))}
    </Tree>
    <Space />
    <HScroll><HThumb /></HScroll>
    <SideFoot />
    <SplitHandle><Dot /></SplitHandle>
  </Side>
);

/* ---------- 3D model ---------- */
const Viewport = styled.main`flex: 1; position: relative; display: flex; justify-content: flex-end;`;
const Scene = styled.svg`position: absolute; left: -1px; top: 0;`;
const olive = '#2c2706', oliveL = '#39330a', oliveD = '#1c1803', navy = '#03243c', navyD = '#011627';

const tri = (pts: string, k: string) => <polygon key={k} points={pts} fill="#3a3409" strokeWidth="4" />;

const MotorBase = () => (
  <>
    <polygon points="-91,108 -130,155 131,155 92,108" fill="#02191f" />
    <polygon points="-48,122 -68,143 -38,145 -24,121" fill="#fff" />
    <polygon points="33,124 44,144 68,144 55,124" fill="#fff" />
    <path d="M-22,110L-44,155M12,110L30,155M-72,118L-95,150M70,118L98,150" fill="none" />
    <path d="M-130,155H131V292L104,318H-104L-130,292Z" fill="url(#motor)" />
    <path d="M-130,264H131M-130,278H131M-128,292H130" fill="none" strokeWidth="4" />
    <rect x="-91" y="66" width="183" height="42" fill="url(#collar)" />
  </>
);
const Hub = () => (
  <>
    <rect x="-24" y="-57" width="46" height="16" fill={navy} />
    <rect x="-46" y="-44" width="92" height="44" rx="3" fill="#bdb3ad" />
    <path d="M-46,-42H-30V-1H-46Z" fill="#6d6661" /><path d="M28,-42H46V-1H28Z" fill="#958c86" />
    <path d="M-66,2H64V66H-62Z" fill="url(#hub)" /><path d="M-66,6H64" stroke="#d21a16" strokeWidth="2" />
    <path d="M-64,2H64" />
  </>
);
const Bolt = ({ x, y, w = 72, h = 30 }: { x: number; y: number; w?: number; h?: number }) => (
  <g transform={`translate(${x} ${y})`}>
    <rect width={w} height={h} rx="3" fill="#bdb3ad" /><path d={`M0,0H${w * 0.2}V${h}H0Z`} fill="#7d756f" /><path d={`M${w * 0.72},0H${w}V${h}H${w * 0.72}Z`} fill="#9c938d" />
  </g>
);
const Screw = ({ x, y }: { x: number; y: number }) => (
  <g transform={`translate(${x} ${y})`}>
    <path d="M0,12Q2,0 30,-3Q60,0 62,12L58,24Q30,30 4,24Z" fill="#c7beb8" strokeWidth="3" />
    <path d="M10,2Q30,-6 52,2L46,10H16Z" fill="#8a817b" strokeDasharray="6 4" /><path d="M0,12Q30,17 62,12" fill="none" strokeWidth="3" />
  </g>
);
const UnderScrew = ({ x, y }: { x: number; y: number }) => (
  <g transform={`translate(${x} ${y})`}><path d="M0,0H48L42,10Q25,18 6,10Z" fill="#b8afa9" strokeWidth="4" /><path d="M12,12H36" strokeWidth="5" /></g>
);
const Leg = ({ x, y, h = 88 }: { x: number; y: number; h?: number }) => (
  <g transform={`translate(${x} ${y})`}><path d={`M0,0H60V${h - 3}L54,${h}H6L0,${h - 3}Z`} fill="#9297ae" /><path d={`M0,0H12V${h}H4L0,${h - 3}Z`} fill="#747990" /><path d={`M12,0V${h}M40,0V${h}M46,0V${h}`} /></g>
);

const Drone = () => (
  <g stroke="#000" strokeWidth="3" strokeLinejoin="round">
    <g transform="translate(450 420) scale(.33333)">
      <g transform="translate(960 136)"><MotorBase /><Hub /></g>
      <path d="M305,205L275,185Q265,173 285,168Q400,150 560,148Q760,148 896,156Q900,180 952,189L900,200Q600,203 305,207Z" fill="#741113" />
      <path d="M1012,157Q1250,145 1540,147V182L1025,187V160Z" fill="#780507" />
      <path d="M848,474V455H955L985,410Q990,400 1005,398L1220,405L1240,465Z" fill={oliveL} />
      <path d="M955,460L1240,455V478L860,490Z" fill={oliveD} />
      {['1020,428 1075,424 1072,434 1050,460 1040,460', '1120,432 1172,434 1175,440 1150,455 1142,455', '985,460 998,435 1012,460', '1085,460 1100,443 1115,460'].map(t => tri(t, t))}
      <Leg x={916} y={585} /><Leg x={1058} y={575} h={30} />
      <UnderScrew x={664} y={592} /><UnderScrew x={760} y={592} />
      <path d="M640,592V540H820L824,492Q845,468 870,470L1340,450V572L716,592Z" fill={olive} />
      <path d="M820,545L835,535Q850,533 858,523L890,484Q898,476 915,476L1335,458" fill="none" strokeWidth="4" />
      <path d="M652,543V592M686,543V592M716,543V592M840,485L875,482L895,480" fill="none" />
      <path d="M686,544H714V590H686Z" fill="#4a430f" stroke="none" opacity=".6" />
      {['912,508 880,556 945,562', '1045,503 1013,552 1080,556', '1180,500 1147,548 1213,552', '945,493 1010,492 978,545', '1078,488 1146,487 1113,540', '1213,485 1275,484 1250,535'].map(t => tri(t, t))}
      <g transform="translate(693 222)"><MotorBase /><Hub /></g>
      <path d="M100,294L63,272Q55,264 75,260Q220,240 380,235Q550,235 628,241Q635,262 702,271L685,283Q400,286 150,299Q118,302 100,294Z" fill="#741113" />
      <path d="M757,243Q1000,227 1180,228H1325Q1330,238 1270,257L1200,260Q950,262 757,272Z" fill="#780507" />
    </g>
    <g transform="translate(1120 420) scale(.33333)">
      <UnderScrew x={732} y={512} /><UnderScrew x={815} y={512} /><UnderScrew x={825} y={508} />
      <path d="M700,415L770,460H898V505L880,511H718Z" fill={olive} /><path d="M748,460V511M828,460V511M880,460V511M865,460V511" />
      <g transform="translate(846 142)"><MotorBase /><Hub /></g>
      <path d="M278,178Q330,152 375,144Q500,133 630,137Q730,143 782,148V194L735,200Q500,197 350,187Z" fill="#6f1012" />
      <path d="M830,163Q1100,165 1200,173Q1330,185 1412,212L1400,216Q1130,207 930,192Q900,178 830,163Z" fill="#780507" />
      <path d="M270,415L450,403V475L200,460Z" fill={oliveL} />{tri('330,436 388,436 375,462 350,455', 'a')}{tri('410,465 425,447 440,465', 'b')}
    </g>
    <g transform="translate(850 420) scale(.33333)">
      <path d="M8,340H22Q24,330 40,327L135,335V455H22V390H8Z" fill="#1d1d1d" /><rect x="8" y="340" width="14" height="50" fill="#444" />
      <rect x="4" y="418" width="22" height="28" rx="6" fill="#555" />
      <path d="M1015,322Q1050,318 1055,335H1090V360L1015,375Z" fill="#333" /><path d="M1063,335V360" />
      <path d="M960,358L1110,366L1125,380V430L1110,455H1000Z" fill="#222" /><path d="M1065,368Q1080,360 1092,372V452H1065Z" fill="#3a3a3a" /><rect x="1104" y="380" width="36" height="50" fill="#4c4c4c" /><path d="M1130,380V430" />
      <Bolt x={937} y={585} w={58} />
      <path d="M136,288L240,262H1015V330L940,345H136Z" fill="#01363d" />
      <path d="M136,335H412V375L400,380V400H136Z" fill={olive} /><path d="M240,342L225,365M328,340V375M400,340V375" />
      <rect x="360" y="376" width="30" height="70" fill="#c4bbb5" /><path d="M398,380V440" />
      <path d="M738,340H930L1015,318V460L1350,468V582L1000,572H738Z" fill={olive} />
      <path d="M780,430Q790,445 810,446L920,340L1000,445Q1015,460 950,460H790Q780,455 780,440" fill="none" />
      <path d="M930,340L955,345L1005,450L990,447Z" fill="#2f2a08" /><path d="M855,440L915,345Q925,335 930,345L868,445Z" fill="#5b5630" /><polygon points="930,350 862,443 988,447" fill="#38320a" />
      <path d="M952,340V365M972,330V372M780,478H880L950,480M780,543L880,540L950,550M875,458V478M865,480L900,540M875,543V568" fill="none" />
      <path d="M683,450V384Q684,371 698,371H738" fill="none" strokeWidth="9" /><path d="M688,450V388Q690,377 738,376" fill="none" stroke="#a8871f" strokeWidth="2" />
      <path d="M708,450V415Q712,402 736,402M724,450V418" fill="none" strokeWidth="7" /><path d="M712,450V416Q716,406 736,406" fill="none" stroke="#a8871f" strokeWidth="2" />
      <path d="M375,445L395,436H740V460H360Z" fill="#20012f" />
      <path d="M492,438V420Q500,412 520,418Q535,412 545,418Q560,412 575,418Q590,412 605,418Q630,410 637,422V438Z" fill="#2d2d2d" strokeWidth="4" />
      <path d="M495,428H634" stroke="#000" strokeWidth="7" strokeDasharray="12 16" />
      <path d="M412,475H458V526H412Z" fill="#c2ab6c" /><path d="M408,478H424V486H408Z" /><path d="M370,538L410,525H700V545H370Z" fill="#1c0128" />
      <rect x="355" y="458" width="393" height="17" fill="#2f0243" /><rect x="355" y="543" width="382" height="18" fill="#2f0243" /><path d="M724,458V475M724,543V561" />
      <path d="M355,475H410V541H355Z" fill="#c2ab6c" /><path d="M694,475H742V541H694Z" fill="#c2ab6c" />
      <path d="M740,342H780V566H738V530Q748,528 748,518V415L738,405Z" fill={oliveD} /><path d="M740,410H748V440H740ZM742,505H748V530H740Z" fill="#fff" stroke="none" />
      <g transform="translate(404 424) scale(.75)"><Screw x={0} y={0} /></g><g transform="translate(360 440) scale(.7)"><Screw x={0} y={0} /></g><g transform="translate(698 444) scale(.72)"><Screw x={0} y={0} /></g>
      <path d="M136,568L260,570H940L1015,572V583L940,610H260L136,604Z" fill="#01292e" />
      <path d="M258,570V610M364,570V610M398,570V610M643,570V610M676,570V610M779,570V610M940,605L960,572" />
      <path d="M779,340V612" strokeWidth="4" />
      <Bolt x={156} y={606} /><Bolt x={238} y={612} /><Bolt x={744} y={612} /><Bolt x={850} y={609} />
      <path d="M136,290L258,295V340L136,334Z" fill="#01333a" /><path d="M258,295H780V340H258Z" fill="#014851" /><path d="M780,295H940V340H780Z" fill="#013f47" />
      <path d="M380,295V340M659,295V340" /><path d="M940,295L952,282L1015,278V318L985,322L940,336Z" fill="#01282d" /><path d="M985,280V322" />
      <Screw x={230} y={241} /><Screw x={160} y={263} /><Screw x={243} y={268} /><Screw x={747} y={269} /><Screw x={856} y={264} />
      <path d="M338,97L450,62L800,63L812,72L717,104H335Z" fill="#777c8f" />
      <path d="M717,104L808,68L812,80V256L717,290Z" fill="#595c67" />
      <path d="M335,108Q336,96 350,96H705Q717,98 717,108V284L710,291H345L335,284Z" fill="#969bb1" />
      <path d="M336,108H384V281H336Z" fill="url(#bevL)" stroke="none" /><path d="M653,108H716V281H653Z" fill="url(#bevR)" stroke="none" />
      <path d="M384,97V290M653,97V290M335,107H717L812,76M335,281H717M717,100V290" fill="none" />
      <path d="M477,91V80L505,78L520,68L545,66L550,57H663V70L640,76L605,91Z" fill="#5d6170" strokeWidth="4" />
      <path d="M495,83H600M515,74H545M560,76L625,74M540,66L600,64M615,62L660,66" strokeWidth="5" strokeDasharray="26 5" />
      {['888,482 950,485 918,530', '985,485 1050,488 1020,535', '1080,490 1138,492 1110,535', '968,495 935,545 995,548', '1068,500 1040,552 1095,556', '1170,505 1145,555 1195,558'].map(t => tri(t, t))}
      <path d="M948,480V568M1015,458L1350,468" fill="none" />
      <g fill="#555"><rect x="327" y="370" width="35" height="30" rx="8" /><rect x="327" y="446" width="35" height="32" rx="8" /><rect x="327" y="527" width="35" height="32" rx="8" /></g>
      <g fill="#555"><rect x="56" y="463" width="52" height="32" rx="8" /><rect x="56" y="514" width="52" height="32" rx="8" /></g><ellipse cx="66" cy="480" rx="8" ry="12" fill="#aab2cc" /><ellipse cx="66" cy="530" rx="8" ry="12" fill="#aab2cc" />
      <path d="M95,380Q100,368 125,370L320,364Q332,366 332,378V555Q328,565 315,567L125,572Q100,570 90,545Z" fill="#2d2d2d" />
      <path d="M113,390Q115,372 127,372Q140,374 142,390V552Q138,572 127,572Q113,568 113,552Z" fill="#383838" /><path d="M142,392L332,385M142,552L330,545M320,366V565" fill="none" />
      <rect x="60" y="386" width="44" height="49" fill="#555" /><path d="M72,386V435" />
    </g>
    <g transform="translate(1120 420) scale(.33333)">
      <path d="M140,572L450,585" fill="none" />
      <path d="M300,464L490,476V586L300,579Z" fill="#231e05" stroke="none" /><path d="M290,463L490,475M290,578L490,587" />
      {['285,488 335,491 310,535', '385,493 435,495 410,545', '260,500 235,550 285,555', '360,505 335,557 385,560', '460,522 440,560 480,560'].map(t => tri(t, t))}
      <Leg x={425} y={588} /><UnderScrew x={490} y={596} /><UnderScrew x={568} y={592} /><UnderScrew x={624} y={596} />
      <path d="M472,545H692V585L680,596H485L472,590Z" fill={oliveL} /><path d="M485,546V594M515,546V594M628,546V594M655,546V594M682,546V594" />
      <path d="M708,420L735,460L728,485L710,488Z" fill={olive} />
      <g transform="translate(580 228)"><MotorBase /><Hub /></g>
      <path d="M-2,262Q50,237 75,232Q220,222 340,225Q450,230 515,234V280L470,287Q250,282 0,270Z" fill="#6f1012" />
      <path d="M565,250Q820,252 950,262Q1100,278 1165,296L1160,301Q900,295 670,280Q630,262 565,250Z" fill="#780507" />
    </g>
  </g>
);

const SceneView = () => (
  <Scene width="1474" height="828" viewBox="272 149 1474 828">
    <defs>
      <linearGradient id="motor"><stop offset="0" stopColor="#010f14" /><stop offset=".5" stopColor="#041f25" /><stop offset="1" stopColor="#010c10" /></linearGradient>
      <linearGradient id="collar"><stop offset="0" stopColor={navyD} /><stop offset=".5" stopColor="#042a49" /><stop offset="1" stopColor={navyD} /></linearGradient>
      <linearGradient id="hub"><stop offset="0" stopColor="#750204" /><stop offset=".5" stopColor="#a30606" /><stop offset="1" stopColor="#820304" /></linearGradient>
      <linearGradient id="bevL"><stop offset="0" stopColor="#686c7e" /><stop offset="1" stopColor="#969bb1" /></linearGradient>
      <linearGradient id="bevR"><stop offset="0" stopColor="#969bb1" /><stop offset="1" stopColor="#6b6f80" /></linearGradient>
    </defs>
    <Drone />
    <g>
      <path d="M297,906H325V912H297Z" fill="#3a3ae0" stroke="#111180" /><path d="M287,909L298,903V915Z" fill="#1818c0" stroke="#0b0b60" />
      <path d="M321,909H327V935H321Z" fill="#57b64f" stroke="#123f12" strokeWidth="1.500" /><path d="M318,935H330L324,947Z" fill="#176117" stroke="#0d3d0d" />
      <circle cx="328" cy="907" r="5.500" fill="#ff9090" /><circle cx="328" cy="907" r="2.600" fill="#3a0808" /><path d="M326,900L333,911M333,900L326,911" stroke="#f00" strokeWidth="1.100" />
      <path d="M278,902H284L278,913H284" fill="none" stroke="#0000f0" strokeWidth="1" /><path d="M320,946L323.500,951L327,946M323.500,951V957" fill="none" stroke="#0a7d0a" strokeWidth="1" />
    </g>
  </Scene>
);

const TaskTabs = styled.nav`width: 33px; margin-top: 29px; display: flex; flex-direction: column; position: relative; height: 210px; border-top: 1px solid #858585;`;
const TaskTab = styled.div<{ $on?: boolean }>`
  height: ${p => (p.$on ? 29 : 30)}px; flex: none; border-left: 1px solid #858585; border-bottom: 1px solid #858585; display: flex; align-items: center; justify-content: center;
  background: ${p => (p.$on ? '#f7f7f7' : '#d4d4d4')};
`;

/* ---------- bottom tabs ---------- */
const BottomTabs = styled.div`
  height: 21px; flex: none; display: flex; border-top: 1px solid #858585; border-bottom: 1px solid #858585; background: #f7f7f7; padding-left: 2px;
`;
const NavBtn = styled.div`width: 20px; background: #a9a9bd; border: 1px solid #8b8ba0; border-top-color: #111; display: flex; align-items: center; justify-content: center;`;
const ModelTab = styled.div<{ $w: number; $on?: boolean; $shift?: number }>`
  width: ${p => p.$w}px; border-right: 1px solid #858585; background: ${p => (p.$on ? '#fff' : '#d4d4d4')}; display: flex; align-items: center; justify-content: center; color: #111;
  padding-right: ${p => p.$shift ?? 0}px;
`;

/* ---------- task pane ---------- */
const Pane = styled.section`width: 173px; display: flex; flex-direction: column; border-left: 1px solid #858585; background: #f7f7f7; overflow: hidden;`;
const PaneHead = styled.div`height: 23px; flex: none; background: #a9aaae; border-bottom: 1px solid #222; display: flex; align-items: center; padding-left: 10px;`;
const PaneBody = styled.div`flex: 1; margin: 2px 0 0 4px; background: #fff; border: 2px solid #e9e9e9; border-right: 0; border-bottom: 0; padding: 34px 0 0 13px; font-family: "Liberation Sans", Arial, sans-serif; overflow: hidden;`;
const PaneTitle = styled.h1`margin: 1px 0 23px; font-size: 22.500px; line-height: 30px; letter-spacing: 0.350px; color: #3d3d3d; font-weight: 700;`;
const PaneText = styled.p`margin: 0; font-size: 20px; line-height: 30px; color: #77797c; white-space: pre;`;
const PaneActions = styled.div`padding-top: 20px;`;
const PaneBtn = styled.div<{ $primary?: boolean; $h: number }>`
  width: 147px; height: ${p => p.$h}px; border-radius: 4px; display: flex; align-items: center; justify-content: center; text-align: center; white-space: pre;
  font-size: 20px; line-height: 23px; color: ${p => (p.$primary ? '#fff' : '#3d3d3d')}; background: ${p => (p.$primary ? '#368ec4' : '#f1f1f1')};
  border: 1px solid ${p => (p.$primary ? '#368ec4' : '#b4b6ba')}; margin-bottom: 4px; padding-bottom: ${p => (p.$primary ? 2 : 1)}px;
`;
const CheckLine = styled.div`display: flex; gap: 19px; padding-top: 3px;`;
const Check = styled.i`width: 25px; height: 24px; margin-top: 8px; flex: none; border: 1px solid #b4b6ba; background: #f1f1f1;`;
const PaneScroll = styled.div`height: 21px; flex: none; margin-left: 6px; background: #f0f0f0; display: flex; align-items: center; border-bottom: 1px solid #999; overflow: hidden;`;
const PaneThumb = styled.div`width: 116px; height: 17px; background: #c1c1c1; flex: none;`;
const PaneFoot = styled.div`height: 4px; flex: none; border-bottom: 1px solid #858585;`;

/* ---------- status bar / taskbar ---------- */
const Status = styled.div`height: 21px; flex: none; display: flex; align-items: center; background: #f7f7f7; padding: 3px 0 0 1px; overflow: hidden;`;
const Taskbar = styled.footer`
  height: 59px; flex: none; border-top: 1px solid #47434a; display: flex; align-items: center; color: #fff;
  background: linear-gradient(90deg, #221d30 0, #221d30 410px, #281a3b 475px, #281a38 600px, #371831 700px, #36202a 810px, #33221f 880px, #33211f 1000px, #46121e 1130px, #4c0f16 1280px, #441310 1400px, #3c1813 1560px, #30191a 1919px);
`;
const TwoLine = styled.div<{ $align?: string; $lift?: number }>`
  display: flex; flex-direction: column; text-align: ${p => p.$align ?? 'left'}; padding-bottom: ${p => p.$lift ?? 0}px;
`;
const SearchPill = styled.div`
  width: 275px; height: 40px; border-radius: 20px; border: 1px solid rgba(255,255,255,.16); background: rgba(255,255,255,.14); display: flex; align-items: center; padding-left: 15px; margin-left: 17px; flex: none;
`;
const AppSlot = styled.div<{ $on?: boolean }>`
  width: 50px; height: 50px; margin-right: 5px; display: grid; place-items: center; position: relative; border-radius: 6px; flex: none;
  ${p => p.$on && css`background: rgba(255,255,255,.08); box-shadow: inset 0 0 0 1px rgba(255,255,255,.08);`}
`;
const RunMark = styled.i<{ $w: number; $c: string }>`position: absolute; bottom: 1px; left: ${p => 25 - p.$w / 2}px; width: ${p => p.$w}px; height: 4px; border-radius: 2px; background: ${p => p.$c};`;
const Badge = styled.b<{ $c: string; $top?: number; $right?: number }>`
  position: absolute; right: ${p => p.$right ?? -1}px; top: ${p => p.$top ?? 4}px; width: 20px; height: 20px; border-radius: 50%; background: ${p => p.$c}; color: #222; font-weight: 400; font-size: 14px; line-height: 20px; text-align: center;
`;
const TaskIcon = ({ children }: { children: React.ReactNode }) => <svg width="30" height="30" viewBox="0 0 30 30">{children}</svg>;

const apps: { k: string; body: React.ReactNode; mark?: [number, string]; badge?: string; on?: boolean }[] = [
  { k: 'copilot', body: <TaskIcon><defs><linearGradient id="cp1" x2="0" y2="1"><stop offset="0" stopColor="#149be8" /><stop offset=".5" stopColor="#35b08a" /><stop offset="1" stopColor="#f3c623" /></linearGradient><linearGradient id="cp2" x2="0" y2="1"><stop offset="0" stopColor="#9a54ee" /><stop offset="1" stopColor="#ff6f8d" /></linearGradient></defs><path d="M8 1H19Q21 2 22 8H17L13 20H5Q-1 20 1 14Q4 1 8 1Z" fill="url(#cp1)" /><path d="M15 1H19Q22 2 22.500 8H17Q18 3 15 1Z" fill="#1741b8" /><path d="M19 8H26Q31 8 29 15Q27 21 23 21H15Z" fill="url(#cp2)" /><rect x="7" y="20" width="23" height="9" rx="2" fill="#ffc60b" /><text x="18.500" y="27.600" fontSize="8.500" fontWeight="800" fontFamily="Open Sans" textAnchor="middle" fill="#222">PRE</text></TaskIcon> },
  { k: 'view', body: <TaskIcon><rect x="8" y="1" width="22" height="19" rx="1" fill="#f3f3f3" /><rect x="0" y="9" width="23" height="19" rx="1" fill="#6e6e6e" /><path d="M8 9H23V20H8Z" fill="#bdbdbd" /></TaskIcon> },
  { k: 'teams', body: <TaskIcon><circle cx="17" cy="6.500" r="4" fill="#7b83eb" /><circle cx="25" cy="8" r="3" fill="#5059c9" /><path d="M20 12H29V20Q28 24 22 23Z" fill="#5059c9" /><path d="M10 12H23V20Q21 26 16 26Q11 25 10 20Z" fill="#7b83eb" /><rect x="2" y="8" width="14" height="14" fill="#fff" /><path d="M5.500 11.500H12.500M9 11.500V19" stroke="#4b53bc" strokeWidth="2.200" /></TaskIcon> },
  { k: 'edge', body: <TaskIcon><defs><linearGradient id="ed" y2=".6"><stop offset="0" stopColor="#1a8fe0" /><stop offset=".6" stopColor="#35c1dc" /><stop offset="1" stopColor="#62d85a" /></linearGradient></defs><circle cx="15" cy="15" r="14.500" fill="#0f6cc4" /><path d="M1 12Q4 .5 15 .5Q29 1 29.500 13Q28 20 20 19Q17 18 19 15Q18 8 11 8Q4 8 1 12Z" fill="url(#ed)" /><path d="M13 12Q10 20 17 23Q22 25 27 22Q22 30 14 29Q7 26 8 18Q9 13 13 12Z" fill="#0b51a3" /><path d="M14 13Q12 18 18 21Q24 22 30 18L27 23Q20 25 15 21Q12 17 14 13Z" fill="#33221f" /></TaskIcon> },
  { k: 'store', body: <TaskIcon><path d="M9 6V1.500H22V6" fill="none" stroke="#27a7ea" strokeWidth="2" /><path d="M1 5H29.500V25Q29 29 26 29H4Q1 28 1 25Z" fill="#f5f5f5" /><path d="M9.500 11H14.500V16H9.500Z" fill="#f25022" /><path d="M15.800 11H21V16H15.800Z" fill="#7fba00" /><path d="M9.500 17.200H14.500V22.300H9.500Z" fill="#00a4ef" /><path d="M15.800 17.200H21V22.300H15.800Z" fill="#ffb900" /></TaskIcon> },
  { k: 'folder', mark: [8, '#a89496'], body: <TaskIcon><path d="M0 3Q0 2 1 2H10L13 6H28V12H0Z" fill="#dc9a07" /><path d="M0 10L13 6.500H30V28H0Z" fill="#fdd04a" /><path d="M5 28V24Q5 21 8 21H22Q25 21 25 24V28Z" fill="#1476c6" /><path d="M9 24.500H21" stroke="#0b4a86" /></TaskIcon> },
  { k: 'mail', body: <TaskIcon><path d="M0 11L15 1L30 11V20H0Z" fill="#0a5fae" /><path d="M3 10H27V20H3Z" fill="#f3f3f3" /><path d="M0 11L15 20L30 11V28.500H0Z" fill="#2fa7e4" /><path d="M30 11V28.500L12 18L15 20Z" fill="#46cdf8" /></TaskIcon> },
  { k: 'firefox', body: <TaskIcon><defs><linearGradient id="ff" x2="0" y2="1"><stop offset="0" stopColor="#ffd93a" /><stop offset=".5" stopColor="#ff7a22" /><stop offset="1" stopColor="#e8177b" /></linearGradient></defs><path d="M3 7L5 2L9 6Q13 5 14 4Q16 0 19 0Q19 4 23 7L25 4Q31 12 28 20Q24 29 15 29Q4 28 1 19Q0 12 3 7Z" fill="url(#ff)" /><circle cx="15.500" cy="15" r="6" fill="#7a3bdc" /><path d="M6 9Q12 10 15 12Q13 14 10 14Q10 18 14 20Q7 20 6 9Z" fill="#ffb02c" /></TaskIcon> },
  { k: 'fb', body: <TaskIcon><circle cx="15" cy="15" r="15" fill="#0d78f2" /><path d="M12.800 24.500V16.500H9.800V12.800H12.800V10.500Q13 6 17.500 6L20 6.300V9.500H18.300Q16.800 9.500 16.800 11V12.800H20L19.500 16.500H16.800V24.500Z" fill="#fff" /></TaskIcon> },
  { k: 'yt', body: <TaskIcon><rect x="0" y="5" width="30" height="21" rx="5" fill="#f00" /><path d="M12 11L20 15.500L12 20Z" fill="#fff" /></TaskIcon> },
  { k: 'wa', mark: [8, '#a89496'], badge: '8', body: <TaskIcon><path d="M2 28.500L4 21.500A13 13 0 1 1 9 26.500Z" fill="none" stroke="#25d366" strokeWidth="3" /><path d="M10 9Q12 7.500 13 9L14 12Q13.500 13.500 12.500 14Q14 17.500 17.500 18.500L19 17L22 18.500Q23 21 19.500 22Q11 21 8.800 13Q8.700 10.500 10 9Z" fill="#25d366" /></TaskIcon> },
  { k: 'sw', mark: [20, '#dd9fe6'], on: true, body: <TaskIcon><path d="M1 5L15 1L28 4V24L15 29L2 22Z" fill="#8d0f12" /><path d="M1 5L15 1L28 4L17 9Z" fill="#e8282c" /><path d="M17 9L28 4V24L17 29Z" fill="#5e0709" /><path d="M1 5L17 9V28L2 22Z" fill="#b01318" /><text x="8" y="20" fontSize="14" fontWeight="800" fontFamily="Open Sans" fill="#fff" textAnchor="middle">S</text><text x="21.500" y="19" fontSize="12" fontWeight="800" fontFamily="Open Sans" fill="#fff" textAnchor="middle">W</text><text x="20.500" y="29" fontSize="7.500" fontWeight="800" fontFamily="Open Sans" fill="#fff" stroke="#000" strokeWidth="2" paintOrder="stroke" textAnchor="middle">2023</text></TaskIcon> },
];

const CoinBox = styled.div`width: 38px; height: 46px; margin-left: 24px; position: relative; padding: 9px 0 0 1px; flex: none;`;
const heart = 'M0,-3Q-4,-9 -8,-5Q-11,0 0,9Q11,0 8,-5Q4,-9 0,-3Z';

const TaskbarView = () => (
  <Taskbar>
    <CoinBox>
      <svg width="26" height="30" viewBox="0 0 28 32"><ellipse cx="12" cy="5" rx="11" ry="4" fill="#f9b233" /><path d="M1 5V9Q12 15 23 9V5Q12 12 1 5Z" fill="#e0861a" /><ellipse cx="13" cy="12" rx="10" ry="4" fill="#f9a826" /><ellipse cx="13" cy="17" rx="11" ry="4" fill="#f9b233" /><path d="M2 17Q13 24 24 17V19Q13 26 2 19Z" fill="#e0861a" /><path d="M10 25L15 28L20 25V27L15 32L10 28Z" fill="#d0451b" stroke="#d0451b" /></svg>
      <Badge $c="#ff99a4" $top={0} $right={4}>1</Badge>
    </CoinBox>
    <Space $w={2} />
    <TwoLine $lift={1}><Label $lh={20} $ls={0}>CAD/INR</Label><Label $lh={20} $ls={-0.3} $color="#e58c9a">-0.62%</Label></TwoLine>
    <Space />
    <svg width="29" height="29" viewBox="0 0 29 29"><defs><linearGradient id="win" x2="1" y2="1"><stop offset="0" stopColor="#7fdcff" /><stop offset="1" stopColor="#0a96ff" /></linearGradient></defs><path d="M1 0H14V14H0V1ZM15 0H28L29 1V14H15ZM0 15H14V29H1L0 28ZM15 15H29V28L28 29H15Z" fill="url(#win)" /></svg>
    <SearchPill>
      <svg width="19" height="19" viewBox="0 0 19 19" fill="none" stroke="#e9e3ec" strokeWidth="2.200"><circle cx="7.500" cy="7.500" r="6.300" /><path d="M12 12L18 18" /></svg>
      <Space $w={11} />
      <Label $size={16.5} $ls={-0.1} $color="#ddd5df">Search</Label>
      <Space />
      <svg width="60" height="32" viewBox="0 0 60 32"><g fill="#f8336b"><path d={heart} transform="translate(10 15) rotate(-8) scale(1.050)" /><path d={heart} transform="translate(51 19) rotate(14) scale(.95)" /></g><path d="M29 2Q26 1 27 5Q28 13 33 14Q39 13 40 5Q41 1 38 2M33 14V17Q33 28 21 26" fill="none" stroke="#a28fc0" strokeWidth="2.500" /><circle cx="20" cy="25" r="3" fill="#234" stroke="#a9d3ee" strokeWidth="2.200" /></svg>
      <Space $w={5} />
    </SearchPill>
    <Space $w={6} />
    {apps.map(a => (
      <AppSlot key={a.k} $on={a.on}>{a.body}{a.mark && <RunMark $w={a.mark[0]} $c={a.mark[1]} />}{a.badge && <Badge $c="#d9a0e2">{a.badge}</Badge>}</AppSlot>
    ))}
    <Space $w={95} />
    <svg width="14" height="9" viewBox="0 0 14 9"><path d="M1 8L7 2L13 8" fill="none" stroke="#fff" strokeWidth="1.600" /></svg>
    <Space $w={23} />
    <svg width="20" height="14" viewBox="0 0 20 14"><path d="M5 10Q4 1 11 1Q16 2 16 6L8 10Z" fill="#c9bcbc" /><path d="M5 13.500Q0 13 0 9.500Q1 6 5 6Q8 6 10 8Q12 6 15 6.500Q20 7 20 10.500Q19 13.500 16 13.500Z" fill="#fff" /></svg>
    <Slot $w={75}><TwoLine $align="center"><Label $lh={20} $ls={-0.5}>ENG</Label><Label $lh={20} $ls={-0.6}>US</Label></TwoLine></Slot>
    <svg width="20" height="16" viewBox="0 0 20 16" fill="none" stroke="#fff" strokeWidth="1.500"><path d="M1 6Q10 -3 19 6M4 9Q10 3 16 9M6.800 12Q10 9 13.200 12" /><circle cx="10" cy="14" r="1.500" fill="#fff" stroke="none" /></svg>
    <Space $w={10} />
    <svg width="20" height="18" viewBox="0 0 20 18" fill="none" stroke="#fff" strokeWidth="1.400"><path d="M1 6.500H4L9 2V16L4 11.500H1ZM12 6Q14 9 12 12M14.500 4Q18 9 14.500 14M17 2.500Q21.500 9 17 15.500" /></svg>
    <Space $w={9} />
    <svg width="21" height="14" viewBox="0 0 21 14"><rect x="1" y="1" width="16" height="12" rx="3" fill="none" stroke="#fff" strokeWidth="1.700" /><rect x="3.500" y="3.500" width="5" height="7" fill="#fff" /><path d="M18 4.500L20.500 5V9L18 9.500Z" fill="#fff" /></svg>
    <Space $w={20} />
    <TwoLine $align="right" $lift={1}><Label $lh={20} $ls={-0.5}>20:19</Label><Label $lh={20} $ls={-0.15}>09-06-2024</Label></TwoLine>
    <Space $w={11} />
    <svg width="17" height="19" viewBox="0 0 17 19" fill="none" stroke="#fff" strokeWidth="1.500"><path d="M1 14.500L3 12V7Q3.500 1.500 8.500 1.500Q13.500 1.500 14 7V12L16 14.500ZM6.500 15Q8.500 20 10.500 15" /></svg>
    <Space $w={26} />
  </Taskbar>
);

export default function App() {
  return (
    <Shell>
      <Global />
      <TitleBarView />
      <RibbonView />
      <Middle>
        <WorkArea>
          <TabsAndHud>
            {commandTabs.map(([t, w, ls, shift]) => <CommandTab key={t} $w={w} $on={t === 'Sketch'} $shift={shift}><Label $ls={ls} $bold={t === 'Sketch'}>{t}</Label></CommandTab>)}
            <Space $w={86} />
            {hud.map(([n, w], i) => <Slot key={i} $w={w} $pad={1}>{n ? <Icon n={n} s={19} /> : <Caret $c="#888" />}</Slot>)}
            <Space />
            {['paneL', 'paneR', 'min', 'restore', 'close'].map(n => <DocButton key={n}><Icon n={n} s={18} /></DocButton>)}
            <Space $w={5} />
          </TabsAndHud>
          <Body>
            <SideView />
            <Viewport>
              <SceneView />
              <TaskTabs>
                {['compass', 'home', 'books', 'folder', 'palette', 'sphere', 'props'].map((n, i) => <TaskTab key={n} $on={i === 0}><Icon n={n} s={i === 5 ? 17 : 19} /></TaskTab>)}
              </TaskTabs>
            </Viewport>
          </Body>
          <BottomTabs>
            {['M4 2V12M13 2L6 7L13 12Z', 'M11 2L4 7L11 12Z', 'M4 2L11 7L4 12Z', 'M11 2V12M3 2L10 7L3 12Z'].map(d => <NavBtn key={d}><svg width="13" height="13" viewBox="0 0 15 14"><path d={d} fill="#8484a0" stroke="#8484a0" strokeWidth="1.300" /></svg></NavBtn>)}
            <ModelTab $w={77} $on><Space $w={3} /><Label $bold $ls={0}>Model</Label></ModelTab>
            <ModelTab $w={89}><Label $ls={0}>3D Views</Label></ModelTab>
            <ModelTab $w={144} $shift={9}><Label $ls={0}>Motion Study 1</Label></ModelTab>
          </BottomTabs>
        </WorkArea>
        <Pane>
          <PaneHead>
            <svg width="11" height="10" viewBox="0 0 11 10"><path d="M5.500 .5L1.500 5L5.500 9.500M10 .5L6 5L10 9.500" fill="none" stroke="#222" strokeWidth="1.600" /></svg>
            <Space $w={1} />
            <Label $bold $size={15} $ls={-0.25}>3DEXPERIENC...</Label>
            <Space />
            <Icon n="gear" s={17} /><Space $w={4} /><Icon n="pin" s={14} /><Space $w={4} />
          </PaneHead>
          <PaneBody>
            <PaneTitle>Update<br />Available</PaneTitle>
            <PaneText>{'A new update of\nthe\n3DEXPERIENCE\nMarketplace for\nSOLIDWORKS\nadd-in is\navailable for\ndownload:\n6.32.2035'}</PaneText>
            <PaneActions>
              <PaneBtn $primary $h={83}>{'Get the\nUpdate'}</PaneBtn>
              <PaneBtn $h={78}>{'Not\nNow'}</PaneBtn>
            </PaneActions>
            <CheckLine><Check /><PaneText>{'Don’t ask\nagain for\nthis update'}</PaneText></CheckLine>
          </PaneBody>
          <PaneScroll><Slot $w={22}><Play $dir="l" $c="#999" $s={5} /></Slot><PaneThumb /><Slot $w={34}><Play $c="#444" $s={5} /></Slot></PaneScroll>
          <PaneFoot />
        </Pane>
      </Middle>
      <Status>
        <Label $ls={-0.46}>SOLIDWORKS Premium 2023 SP3.0</Label>
        <Space />
        <Icon n="warn" s={15} /><Space $w={1} />
        <Slot $w={87}><Label $color="#f00" $ls={-0.45}>Over Defined</Label></Slot>
        <Space $w={18} />
        <Slot $w={114}><Label $ls={-0.3}>Editing Assembly</Label></Slot>
        <Space $w={28} /><Icon n="rebuild" s={15} /><Space $w={82} />
        <Slot $w={44}><Label $ls={-0.4}>MMGS</Label></Slot>
        <Space $w={26} /><svg width="6" height="4" viewBox="0 0 6 4"><path d="M0 4L3 0L6 4Z" fill="#333" /></svg><Space $w={26} /><Icon n="tag" s={16} /><Space $w={2} />
      </Status>
      <TaskbarView />
    </Shell>
  );
}
